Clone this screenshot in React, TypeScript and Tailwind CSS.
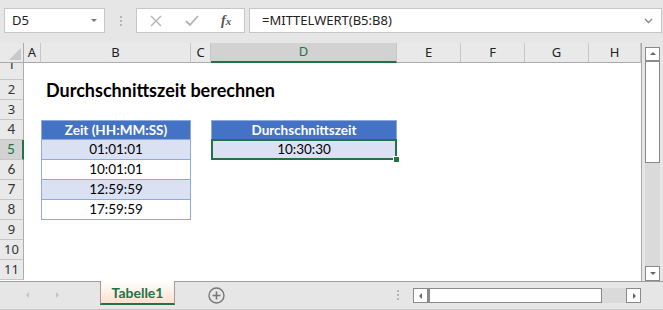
import React from 'react'

const cols = [
  { l: 'A', w: 'w-[17px]' },
  { l: 'B', w: 'w-[150px]' },
  { l: 'C', w: 'w-[20px]' },
  { l: 'D', w: 'w-[186px]' },
  { l: 'E', w: 'w-[64px]' },
  { l: 'F', w: 'w-[64px]' },
  { l: 'G', w: 'w-[64px]' },
  { l: 'H', w: 'w-[52px]' },
]

const times = ['01:01:01', '10:01:01', '12:59:59', '17:59:59']

const RowHead = ({ n, active }: { n: number; active?: boolean }) => (
  <div
    className={
      active
        ? 'w-[24px] shrink-0 flex items-center justify-center bg-[#d2d2d2] text-[#217346] border-r-2 border-r-[#217346] border-b border-b-[#c6c6c6]'
        : 'w-[24px] shrink-0 flex items-center justify-center bg-[#e9e9e9] text-[#333] border-r border-r-[#ababab] border-b border-b-[#c6c6c6]'
    }
  >
    {n}
  </div>
)

const Tri = ({ dir, cls }: { dir: 'up' | 'down' | 'left' | 'right'; cls: string }) => {
  const pts = {
    up: '1,5 4,2 7,5',
    down: '1,2 4,5 7,2',
    left: '5,1 2,4 5,7',
    right: '3,1 6,4 3,7',
  }[dir]
  return (
    <svg width="8" height="8" viewBox="0 0 8 8" className={cls}>
      <polygon points={pts} fill="currentColor" />
    </svg>
  )
}

export default function App() {
  return (
    <div className="w-[663px] h-[310px] bg-[#e6e6e6] flex flex-col overflow-hidden font-[family-name:'Noto_Sans',sans-serif] text-[13px] text-[#222]">
      {/* formula bar */}
      <div className="h-[43px] shrink-0 flex items-start pt-[8px]">
        <div className="ml-[4px] w-[101px] h-[25px] bg-white border border-[#c6c6c6] flex items-center justify-between pl-[7px] pr-[6px]">
          <span>D5</span>
          <Tri dir="down" cls="text-[#777]" />
        </div>
        <div className="w-[31px] h-[25px] flex flex-col items-center justify-center gap-[2px]">
          <div className="w-[2px] h-[2px] bg-[#b5b5b5]" />
          <div className="w-[2px] h-[2px] bg-[#b5b5b5]" />
          <div className="w-[2px] h-[2px] bg-[#b5b5b5]" />
        </div>
        <div className="w-[109px] h-[25px] bg-white border border-[#c6c6c6] flex items-center">
          <svg width="12" height="12" viewBox="0 0 12 12" className="ml-[13px]">
            <path d="M1 1 L11 11 M11 1 L1 11" stroke="#b3b3b3" strokeWidth="1.4" />
          </svg>
          <svg width="14" height="12" viewBox="0 0 14 12" className="ml-[23px]">
            <path d="M1 6 L5 10 L13 1" stroke="#b3b3b3" strokeWidth="1.8" fill="none" />
          </svg>
          <span className="ml-[22px] italic font-[family-name:'Liberation_Serif',serif] text-[14px] text-[#555] font-bold">
            f<span className="text-[11px]">x</span>
          </span>
        </div>
        <div className="ml-[4px] w-[413px] h-[25px] bg-white border border-[#c6c6c6] flex items-center justify-between pl-[12px] pr-[8px]">
          <span>=MITTELWERT(B5:B8)</span>
          <svg width="9" height="6" viewBox="0 0 9 6">
            <path d="M1 1 L4.5 4.5 L8 1" stroke="#888" strokeWidth="1.3" fill="none" />
          </svg>
        </div>
      </div>

      {/* grid */}
      <div className="flex h-[238px] shrink-0">
        <div className="w-[642px] bg-white border-r border-[#a6a6a6] flex flex-col overflow-hidden">
          {/* column headers */}
          <div className="flex h-[20px] shrink-0 bg-[#e9e9e9]">
            <div className="w-[24px] shrink-0 border-r border-[#ababab] border-b border-b-[#ababab] flex items-end justify-end p-[2px]">
              <svg width="12" height="12" viewBox="0 0 12 12">
                <polygon points="12,0 12,12 0,12" fill="#c8c8c8" />
              </svg>
            </div>
            {cols.map((c) => (
              <div
                key={c.l}
                className={
                  c.l === 'D'
                    ? c.w + ' shrink-0 flex items-center justify-center bg-[#d2d2d2] text-[#217346] border-b-2 border-b-[#217346] border-r border-r-[#c6c6c6]'
                    : c.w + ' shrink-0 flex items-center justify-center border-r border-r-[#c6c6c6] border-b border-b-[#ababab]'
                }
              >
                {c.l}
              </div>
            ))}
          </div>

          {/* row 1, scrolled so only its lower part shows */}
          <div className="flex h-[17px] shrink-0">
            <div className="w-[24px] shrink-0 flex justify-center bg-[#e9e9e9] border-r border-[#ababab] border-b border-b-[#c6c6c6] overflow-hidden">
              <span className="-mt-[9px] leading-[20px]">1</span>
            </div>
          </div>

          {/* row 2 title */}
          <div className="flex h-[20px] shrink-0">
            <RowHead n={2} />
            <div className="pl-[22px] flex items-center font-[family-name:Lato,sans-serif] font-bold text-[18px] text-black">
              Durchschnittszeit berechnen
            </div>
          </div>

          <div className="flex h-[20px] shrink-0">
            <RowHead n={3} />
          </div>

          {/* row 4 headers */}
          <div className="flex h-[20px] shrink-0 font-[family-name:Lato,sans-serif] text-[13.5px]">
            <RowHead n={4} />
            <div className="w-[17px] shrink-0" />
            <div className="w-[150px] shrink-0 bg-[#4472c4] border border-[#8ea9db] text-white font-bold flex items-center justify-center">
              Zeit (HH:MM:SS)
            </div>
            <div className="w-[20px] shrink-0" />
            <div className="w-[186px] shrink-0 bg-[#4472c4] border border-[#8ea9db] text-white font-bold flex items-center justify-center">
              Durchschnittszeit
            </div>
          </div>

          {times.map((t, i) => (
            <div key={t} className="flex h-[20px] shrink-0 font-[family-name:Lato,sans-serif] text-[13.5px] text-black">
              <RowHead n={5 + i} active={i === 0} />
              <div className="w-[17px] shrink-0" />
              <div
                className={
                  i % 2 === 0
                    ? 'w-[150px] shrink-0 bg-[#d9e1f2] border-x border-b border-[#8ea9db] flex items-center justify-center'
                    : 'w-[150px] shrink-0 bg-white border-x border-b border-[#8ea9db] flex items-center justify-center'
                }
              >
                {t}
              </div>
              <div className="w-[20px] shrink-0" />
              {i === 0 && (
                <div className="relative w-[186px] shrink-0 bg-[#d9e1f2] border-x border-b border-[#8ea9db] flex items-center justify-center">
                  10:30:30
                  <div className="absolute -left-[1px] -top-[1px] -right-[1px] -bottom-[1px] border-2 border-[#217346]" />
                  <div className="absolute -right-[4px] -bottom-[4px] w-[7px] h-[7px] bg-[#217346] border border-white" />
                </div>
              )}
            </div>
          ))}

          {[9, 10, 11].map((n) => (
            <div key={n} className="flex h-[20px] shrink-0">
              <RowHead n={n} />
            </div>
          ))}
        </div>

        {/* vertical scrollbar */}
        <div className="w-[21px] flex flex-col pl-[3px] pt-[4px]">
          <div className="w-[15px] h-[14px] bg-white border border-[#8a8a8a] flex items-center justify-center">
            <Tri dir="up" cls="text-[#666]" />
          </div>
          <div className="w-[15px] h-[102px] bg-white border border-[#8a8a8a]" />
          <div className="w-[15px] flex-1 bg-[#dadada]" />
          <div className="w-[15px] h-[15px] bg-white border border-[#8a8a8a] flex items-center justify-center">
            <Tri dir="down" cls="text-[#666]" />
          </div>
        </div>
      </div>

      {/* sheet tabs */}
      <div className="flex-1 flex items-start border-t border-[#9e9e9e] border-b border-b-[#c8c8c8]">
        <div className="w-[100px] h-[26px] flex items-center pl-[24px] gap-[21px]">
          <Tri dir="left" cls="text-[#c4c4c4]" />
          <Tri dir="right" cls="text-[#c4c4c4]" />
        </div>
        <div className="-mt-[1px] w-[75px] h-[24px] border-x border-[#9e9e9e] border-b-2 border-b-[#217346] bg-gradient-to-b from-white to-[#fbe1cf] flex items-center justify-center font-[family-name:Lato,sans-serif] font-bold text-[14px] text-[#217346]">
          Tabelle1
        </div>
        <div className="ml-[33px] h-[26px] flex items-center">
          <svg width="17" height="17" viewBox="0 0 17 17">
            <circle cx="8.5" cy="8.5" r="7.5" stroke="#777" strokeWidth="1.4" fill="none" />
            <path d="M8.5 4.5 V12.5 M4.5 8.5 H12.5" stroke="#777" strokeWidth="1.6" />
          </svg>
        </div>
        <div className="ml-[172px] h-[26px] flex flex-col items-center justify-center gap-[2px]">
          <div className="w-[2px] h-[2px] bg-[#b5b5b5]" />
          <div className="w-[2px] h-[2px] bg-[#b5b5b5]" />
          <div className="w-[2px] h-[2px] bg-[#b5b5b5]" />
        </div>
        <div className="ml-[14px] mt-[6px] w-[228px] h-[15px] flex">
          <div className="w-[15px] h-[15px] bg-white border border-[#8a8a8a] flex items-center justify-center">
            <Tri dir="left" cls="text-[#666]" />
          </div>
          <div className="w-[174px] h-[15px] bg-white border border-[#8a8a8a] border-l-2" />
          <div className="flex-1 h-[15px] bg-[#dadada]" />
          <div className="w-[15px] h-[15px] bg-white border border-[#8a8a8a] flex items-center justify-center">
            <Tri dir="right" cls="text-[#666]" />
          </div>
        </div>
      </div>
    </div>
  )
}
